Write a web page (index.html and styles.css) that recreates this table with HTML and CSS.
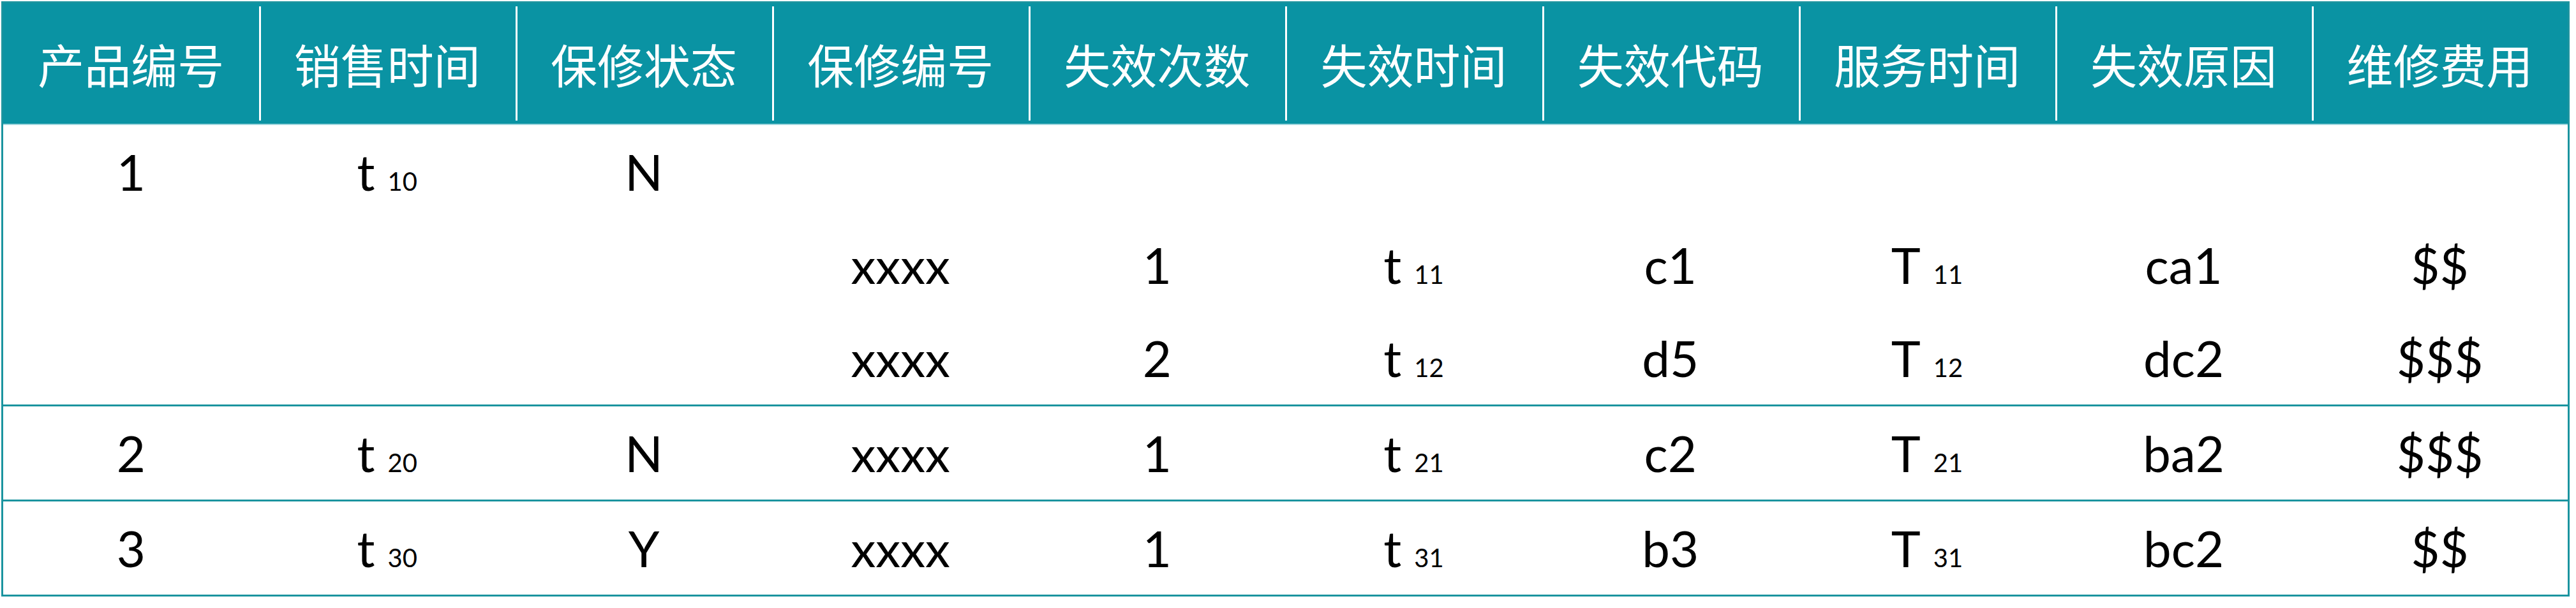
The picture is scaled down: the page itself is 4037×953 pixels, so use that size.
FILE: index.html
```html
<!DOCTYPE html>
<html lang="zh-CN">
<head>
<meta charset="utf-8">
<title>保修记录表</title>
<link rel="stylesheet" href="styles.css">
</head>
<body>
<div class="wrap">
<table class="grid">
  <thead>
    <tr>
      <th class="first">产品编号</th>
      <th>销售时间</th>
      <th>保修状态</th>
      <th>保修编号</th>
      <th>失效次数</th>
      <th>失效时间</th>
      <th>失效代码</th>
      <th>服务时间</th>
      <th>失效原因</th>
      <th>维修费用</th>
    </tr>
  </thead>
  <tbody>
    <tr>
      <td>1</td><td>t<span class="sub">10</span></td><td>N</td>
      <td></td><td></td><td></td><td></td><td></td><td></td><td></td>
    </tr>
    <tr>
      <td></td><td></td><td></td>
      <td>xxxx</td><td>1</td><td>t<span class="sub">11</span></td><td>c1</td><td>T<span class="sub">11</span></td><td>ca1</td><td>$$</td>
    </tr>
    <tr class="end">
      <td></td><td></td><td></td>
      <td>xxxx</td><td>2</td><td>t<span class="sub">12</span></td><td>d5</td><td>T<span class="sub">12</span></td><td>dc2</td><td>$$$</td>
    </tr>
    <tr class="end">
      <td>2</td><td>t<span class="sub">20</span></td><td>N</td>
      <td>xxxx</td><td>1</td><td>t<span class="sub">21</span></td><td>c2</td><td>T<span class="sub">21</span></td><td>ba2</td><td>$$$</td>
    </tr>
    <tr class="end">
      <td>3</td><td>t<span class="sub">30</span></td><td>Y</td>
      <td>xxxx</td><td>1</td><td>t<span class="sub">31</span></td><td>b3</td><td>T<span class="sub">31</span></td><td>bc2</td><td>$$</td>
    </tr>
  </tbody>
</table>
</div>
</body>
</html>
```

FILE: styles.css
```css
html, body {
  margin: 0;
  padding: 0;
  background: #ffffff;
}

.wrap {
  padding: 2px 0 0 2px;
}

.grid {
  border-collapse: collapse;
  table-layout: fixed;
  width: 4025px;
  border: 3px solid #1b949f;
}

.grid th {
  height: 189px;
  padding: 0;
  background-color: #0a93a3;
  background-image: linear-gradient(#ffffff, #ffffff);
  background-repeat: no-repeat;
  background-size: 3px calc(100% - 10px);
  background-position: left 5px;
  color: #ffffff;
  font-family: "Noto Sans CJK SC", "Noto Sans", sans-serif;
  font-weight: 400;
  font-size: 73px;
  line-height: 1;
  text-align: center;
  vertical-align: middle;
  border-bottom: 2px solid #9fd6dd;
}

.grid th.first {
  background-image: none;
}

.grid td {
  height: 146px;
  padding: 0;
  text-align: center;
  vertical-align: middle;
  color: #000000;
  font-family: Lato, "Open Sans", sans-serif;
  font-size: 78px;
  font-weight: 400;
  line-height: 1;
}

.grid tr.end td {
  border-bottom: 3px solid #1b949f;
}

.sub {
  font-size: 40px;
  margin-left: 20px;
}
```
